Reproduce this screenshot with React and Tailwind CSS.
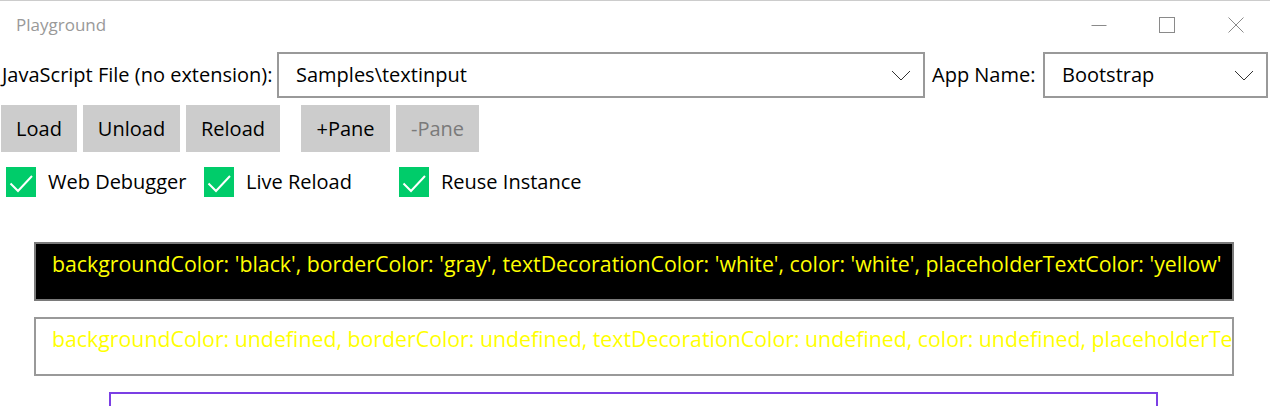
const font = "font-['Open_Sans',sans-serif]"

function Chevron() {
  return (
    <svg width="20" height="11" viewBox="0 0 20 11" className="shrink-0">
      <path d="M1 1 L10 10 L19 1" fill="none" stroke="#333333" strokeWidth="1" />
    </svg>
  )
}

function Combo({ value, className }) {
  return (
    <div className={`h-[46px] border-2 border-[#999999] bg-white flex items-center justify-between pl-[17px] pr-[12px] ${className}`}>
      <span className="text-[20px] text-black leading-none">{value}</span>
      <Chevron />
    </div>
  )
}

function Btn({ children, w, disabled }) {
  return (
    <button className={`h-[47px] ${w} bg-[#cccccc] text-[20px] flex items-center justify-center ${disabled ? 'text-[#7a7a7a]' : 'text-black'}`}>
      {children}
    </button>
  )
}

function Check({ label, w }) {
  return (
    <label className={`flex items-center ${w}`}>
      <span className="w-[30px] h-[30px] bg-[#00cc6a] flex items-center justify-center shrink-0">
        <svg width="30" height="30" viewBox="0 0 30 30">
          <path d="M4.5 16.5 L12 24 L26 9" fill="none" stroke="white" strokeWidth="2" />
        </svg>
      </span>
      <span className="ml-[12px] text-[20px] text-black">{label}</span>
    </label>
  )
}

export default function App() {
  return (
    <div className={`w-[1270px] h-[406px] overflow-hidden bg-white border-t border-[#cccccc] ${font}`}>

      {/* title bar */}
      <div className="h-[51px] flex justify-between">
        <div className="pl-[16px] pt-[11px] text-[17px] text-[#999999]">Playground</div>
        <div className="flex">
          <div className="w-[68px] h-[47px] flex items-center justify-center">
            <svg width="16" height="16" viewBox="0 0 16 16"><path d="M0.5 8.5 H15.5" stroke="#8a8a8a" strokeWidth="1" /></svg>
          </div>
          <div className="w-[68px] h-[47px] flex items-center justify-center">
            <svg width="16" height="16" viewBox="0 0 16 16"><rect x="0.5" y="0.5" width="15" height="15" fill="none" stroke="#8a8a8a" strokeWidth="1" /></svg>
          </div>
          <div className="w-[69px] h-[47px] flex items-center justify-center">
            <svg width="16" height="16" viewBox="0 0 16 16"><path d="M0.5 0.5 L15.5 15.5 M15.5 0.5 L0.5 15.5" stroke="#8a8a8a" strokeWidth="1" /></svg>
          </div>
        </div>
      </div>

      {/* file row */}
      <div className="flex items-center h-[46px]">
        <div className="w-[277px] pl-[2px] text-[20px] text-black whitespace-nowrap">JavaScript File (no extension):</div>
        <Combo value="Samples\textinput" className="w-[648px]" />
        <div className="w-[118px] pl-[7px] text-[20px] text-black whitespace-nowrap">App Name:</div>
        <Combo value="Bootstrap" className="w-[225px]" />
      </div>

      {/* buttons */}
      <div className="flex mt-[7px] pl-[1px] gap-[6px]">
        <Btn w="w-[76px]">Load</Btn>
        <Btn w="w-[97px]">Unload</Btn>
        <Btn w="w-[94px]">Reload</Btn>
        <div className="w-[9px]" />
        <Btn w="w-[89px]">+Pane</Btn>
        <Btn w="w-[83px]" disabled>-Pane</Btn>
      </div>

      {/* checkboxes */}
      <div className="flex mt-[15px] pl-[6px]">
        <Check label="Web Debugger" w="w-[198px]" />
        <Check label="Live Reload" w="w-[195px]" />
        <Check label="Reuse Instance" />
      </div>

      {/* text inputs */}
      <div className="mt-[45px] pl-[34px] flex flex-col gap-[16px]">
        <div className="w-[1200px] h-[59px] border-2 border-[#7a7a7a] bg-black pl-[16px] pt-[4px] overflow-hidden whitespace-nowrap text-[21.3px] text-[#ffff00]">
          backgroundColor: 'black', borderColor: 'gray', textDecorationColor: 'white', color: 'white', placeholderTextColor: 'yellow'
        </div>
        <div className="w-[1200px] h-[59px] border-2 border-[#999999] bg-white pl-[16px] pt-[4px] overflow-hidden whitespace-nowrap text-[21.3px] text-[#ffff00]">
          backgroundColor: undefined, borderColor: undefined, textDecorationColor: undefined, color: undefined, placeholderTextColor: undefined
        </div>
        <div className="ml-[75px] w-[1049px] h-[40px] border-2 border-[#7b3fe4]" />
      </div>

    </div>
  )
}
